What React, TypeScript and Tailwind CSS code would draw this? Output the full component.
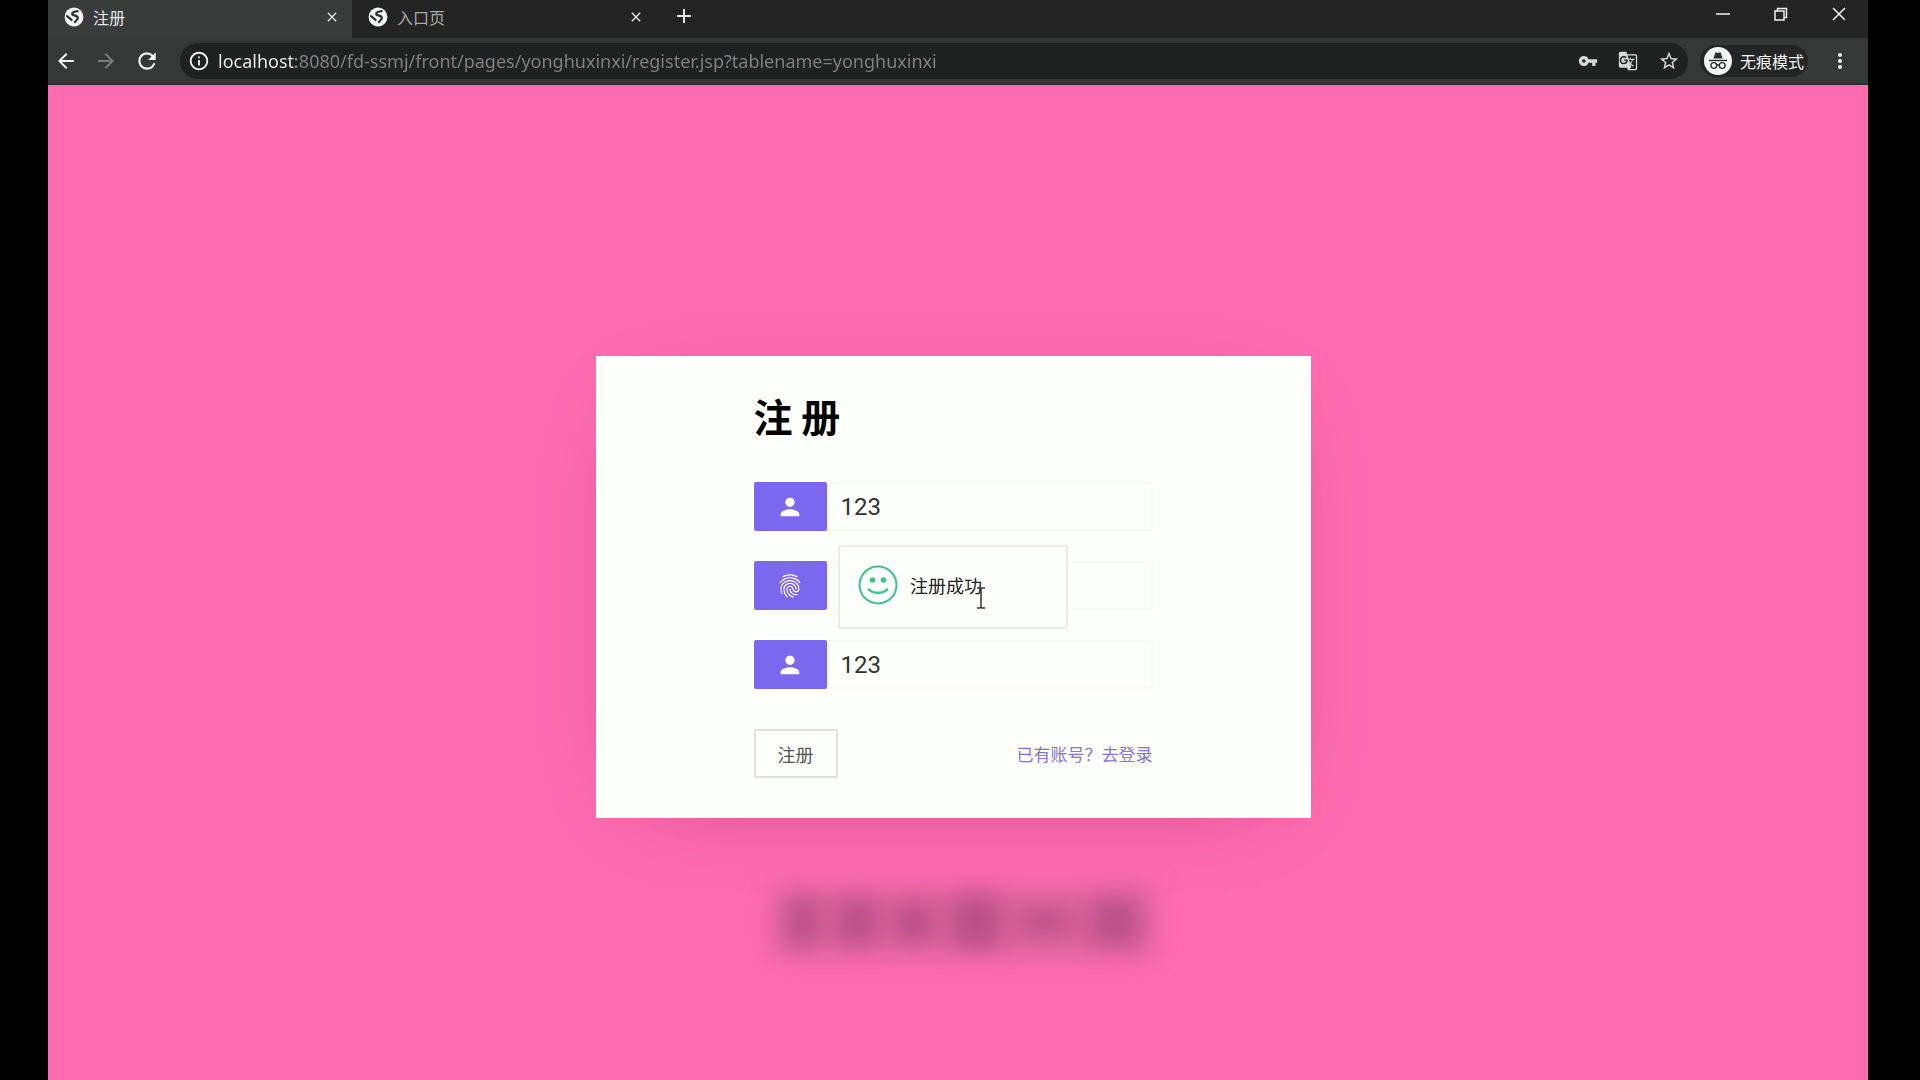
import React from "react";
import {
  MdArrowBack,
  MdArrowForward,
  MdClose,
  MdFingerprint,
  MdGTranslate,
  MdInfoOutline,
  MdMoreVert,
  MdPerson,
  MdRefresh,
  MdStarOutline,
  MdVpnKey,
  MdAdd,
} from "react-icons/md";

const tabs = [
  { title: "注册", active: true },
  { title: "入口页", active: false },
];

const fields = [
  { id: "account", label: "账号", type: "text", value: "123", icon: MdPerson },
  { id: "password", label: "密码", type: "password", value: "", icon: MdFingerprint },
  { id: "name", label: "姓名", type: "text", value: "123", icon: MdPerson },
];

// smudges in the blurred caption
const smudges = [
  "w-8 h-12",
  "w-10 h-12",
  "w-10 h-10",
  "w-12 h-14",
  "w-14 h-6",
  "w-12 h-12",
];

function Globe() {
  return (
    <svg viewBox="0 0 20 20" className="w-5 h-5 shrink-0" aria-hidden="true">
      <circle cx="10" cy="10" r="9.4" fill="#f4f6f6" />
      <path
        d="M13.600 4.200c-1.600.2-4.200.4-5.200 1.800-.8 1.200.2 2 1.800 2.300 2.200.4 3.800.9 3.600 2.900-.2 1.700-1.900 2.200-2.900 3.800M3 9.200l4.600 3.600"
        fill="none"
        stroke="#2c2e2e"
        strokeWidth="2.200"
        strokeLinecap="round"
      />
    </svg>
  );
}

function Incognito() {
  return (
    <svg viewBox="0 0 28 28" className="w-7 h-7" aria-hidden="true">
      <circle cx="14" cy="14" r="14" fill="#f4f6f6" />
      <path d="M9.500 11.500l1.700-5.500c.2-.6.700-.8 1.200-.6l1.600.5 1.600-.5c.5-.2 1 0 1.200.6l1.700 5.500z" fill="#2c2e2e" />
      <path d="M5 13.500h18" stroke="#2c2e2e" strokeWidth="1.400" />
      <g fill="none" stroke="#2c2e2e" strokeWidth="1.400">
        <circle cx="9.800" cy="18.500" r="2.900" />
        <circle cx="18.200" cy="18.500" r="2.900" />
        <path d="M12.700 18.200c.8-.6 1.800-.6 2.600 0" />
      </g>
    </svg>
  );
}

function WindowButtons() {
  return (
    <div className="flex items-center gap-10 h-7 pr-5 text-[#f1f1f1]">
      <button aria-label="最小化">
        <svg viewBox="0 0 18 18" className="w-[18px] h-[18px]" stroke="currentColor" strokeWidth="1.500">
          <path d="M2 9h14" />
        </svg>
      </button>
      <button aria-label="还原">
        <svg viewBox="0 0 18 18" className="w-[18px] h-[18px]" fill="none" stroke="currentColor" strokeWidth="1.500">
          <path d="M3 6h9v9H3zM5.500 6V3.500h9v9H12" />
        </svg>
      </button>
      <button aria-label="关闭">
        <svg viewBox="0 0 18 18" className="w-[18px] h-[18px]" stroke="currentColor" strokeWidth="1.500">
          <path d="M3 3l12 12M15 3L3 15" />
        </svg>
      </button>
    </div>
  );
}

function TabStrip() {
  return (
    <div className="flex justify-between bg-[#242424]">
      <div className="flex">
        {tabs.map((tab) => (
          <div
            key={tab.title}
            className={
              tab.active
                ? "flex items-center w-[304px] h-[38px] pb-1 pl-4 pr-3 gap-2 bg-[#3a3b3b] text-[#e4e6e6]"
                : "flex items-center w-[304px] h-[38px] pb-1 pl-4 pr-3 gap-2 text-[#a9abab]"
            }
          >
            <Globe />
            <a href="#" className="flex-1 pl-px text-base">
              {tab.title}
            </a>
            <button aria-label="关闭标签页" className="text-[#e4e6e6]">
              <MdClose size={16} />
            </button>
          </div>
        ))}
        <button aria-label="新标签页" className="h-8 pl-4 text-[#e4e6e6]">
          <MdAdd size={24} />
        </button>
      </div>
      <WindowButtons />
    </div>
  );
}

function Toolbar() {
  return (
    <div className="flex items-center h-[47px] pl-[6px] pr-4 bg-[#363838] border-b-2 border-[#33283a] text-[#f1f3f3]">
      <div className="flex items-center gap-4">
        <button aria-label="后退">
          <MdArrowBack size={24} />
        </button>
        <button aria-label="前进" className="text-[#7c7e7e]">
          <MdArrowForward size={24} />
        </button>
        <button aria-label="刷新">
          <MdRefresh size={26} />
        </button>
      </div>
      <div className="flex flex-1 items-center h-9 ml-5 pl-2 pr-2 rounded-full bg-[#202222]">
        <MdInfoOutline size={22} />
        <input
          aria-label="地址栏"
          readOnly
          value="localhost:8080/fd-ssmj/front/pages/yonghuxinxi/register.jsp?tablename=yonghuxinxi"
          className="flex-1 min-w-0 ml-2 outline-none text-lg leading-7 font-['Noto_Sans','Noto_Sans_CJK_SC',sans-serif] text-transparent bg-clip-text bg-[linear-gradient(90deg,#f1f3f3_78px,#808383_78px)]"
        />
        <div className="flex items-center gap-5 text-[#d8dada]">
          <button aria-label="密码">
            <MdVpnKey size={20} />
          </button>
          <button aria-label="翻译">
            <MdGTranslate size={20} />
          </button>
          <button aria-label="收藏">
            <MdStarOutline size={22} />
          </button>
        </div>
      </div>
      <div className="flex items-center h-8 ml-3 pl-1 pr-1 gap-2 rounded-full bg-[#242626] text-base">
        <Incognito />
        无痕模式
      </div>
      <button aria-label="菜单" className="ml-5">
        <MdMoreVert size={24} />
      </button>
    </div>
  );
}

function Toast() {
  return (
    <div
      role="status"
      className="absolute top-1/2 left-1/2 -translate-x-1/2 -translate-y-1/2 flex items-center w-[230px] h-[84px] pl-[18px] gap-3 pb-1 bg-[#fcfffa] border-2 border-[#e9ece7] rounded-xs text-lg leading-6 text-[#222]"
    >
      <svg viewBox="0 0 40 40" className="w-10 h-10" fill="none" stroke="#3cc48c" aria-hidden="true">
        <circle cx="20" cy="20" r="18.500" strokeWidth="2" />
        <path d="M11 24.500c4 4.500 14 4.500 18 0" strokeWidth="2.600" strokeLinecap="round" />
        <circle cx="14.500" cy="15" r="2.800" fill="#3cc48c" stroke="none" />
        <circle cx="25.500" cy="15" r="2.800" fill="#3cc48c" stroke="none" />
      </svg>
      注册成功
      <svg
        viewBox="0 0 10 22"
        className="absolute top-10 left-[136px] w-[10px] h-[22px]"
        fill="none"
        stroke="#333"
        strokeWidth="1.500"
        aria-hidden="true"
      >
        <path d="M1 1h3l1 1 1-1h3M5 2v18M1 21h3l1-1 1 1h3" />
      </svg>
    </div>
  );
}

function RegisterCard() {
  return (
    <div className="relative w-[715px] px-[158px] pt-9 pb-10 bg-[#fcfffa] shadow-[0_16px_90px_-50px_rgba(0,0,0,0.35)]">
      <h1 className="text-[39px] leading-[46px] font-bold text-black">注 册</h1>
      <form className="mt-11" onSubmit={(e) => e.preventDefault()}>
        <div className="flex flex-col gap-[30px]">
          {fields.map(({ id, label, type, value, icon: Icon }) => (
            <div key={id} className="flex h-[49px]">
              <label
                htmlFor={id}
                aria-label={label}
                className="flex items-center justify-center w-[73px] rounded-xs bg-[#7b68ee] text-white"
              >
                <Icon size={28} />
              </label>
              <input
                id={id}
                type={type}
                defaultValue={value}
                className="flex-1 min-w-0 px-3 border-2 border-[#f6f8f4] outline-none font-[Roboto,sans-serif] text-2xl text-[#333]"
              />
            </div>
          ))}
        </div>
        <div className="flex items-center justify-between mt-10">
          <button
            type="submit"
            className="h-[49px] px-[22px] border-2 border-[#dde1dc] rounded-xs text-lg text-[#555]"
          >
            注册
          </button>
          <a href="#" className="text-[17px] text-[#8573e0]">
            已有账号？去登录
          </a>
        </div>
      </form>
      <Toast />
    </div>
  );
}

export default function App() {
  return (
    <div className="min-h-screen flex flex-col pl-12 pr-13 bg-black font-['Noto_Sans_CJK_SC',sans-serif]">
      <TabStrip />
      <Toolbar />
      <main className="flex-1 flex flex-col items-center pt-[271px] pr-[10px] bg-[#ff6bb0]">
        <RegisterCard />
        {/* Blurred caption under the card */}
        <div
          className="flex items-center justify-between w-[384px] h-18 mt-[68px] ml-5 px-4 rounded-lg bg-[#dc659d] blur-md"
          aria-hidden="true"
        >
          {smudges.map((size, i) => (
            <div key={i} className={`${size} rounded-lg bg-[#bb5086]`} />
          ))}
        </div>
      </main>
    </div>
  );
}
